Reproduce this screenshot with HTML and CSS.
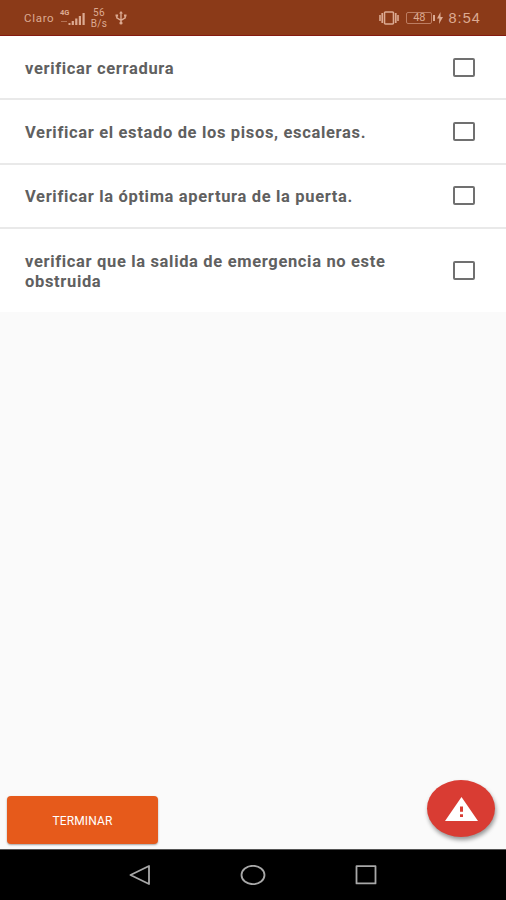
FILE: index.html
```html
<!DOCTYPE html>
<html lang="es">
<head>
    <meta charset="UTF-8">
    <meta name="viewport" content="width=device-width, initial-scale=1.0">
    <title>Checklist</title>
    <link rel="stylesheet" href="styles.css">
</head>
<body>
    <div class="screen">
        <header class="status-bar">
            <div class="status-left">
                <span class="carrier">Claro</span>
                <div class="signal">
                    <span class="network">4G</span>
                    <svg width="26" height="18" viewBox="0 0 26 18" fill="currentColor">
                        <path d="M1 12h6v1H1z" opacity=".5"/>
                        <path d="M8.500 14h2v2h-2zM11.700 12h2.200v4h-2.200zM15.200 9.500h2.200V16h-2.200zM18.800 7H21v9h-2.200zM22.500 4h2.200v12h-2.200z"/>
                    </svg>
                </div>
                <div class="speed"><span>56</span><span>B/s</span></div>
                <svg class="usb" width="12" height="14" viewBox="0 0 12 14" fill="none" stroke="currentColor" stroke-width="1.400">
                    <path d="M6 2v9M1.800 4.500v2.300L6 9.300M10.200 4.500v2.300L6 9.300"/>
                    <path d="M6 0l2 2.500H4zM.5 3.500h2.600v2H.5zM9 3.500h2.500v2H9z" fill="currentColor" stroke="none"/>
                    <circle cx="6" cy="12" r="1.600" fill="currentColor" stroke="none"/>
                </svg>
            </div>
            <div class="status-right">
                <svg width="20" height="14" viewBox="0 0 20 14" fill="none" stroke="currentColor" stroke-width="1.600">
                    <rect x="5.500" y="1" width="9" height="12" rx="1"/>
                    <path d="M3.200 2v10M16.800 2v10M1 4v6M19 4v6"/>
                </svg>
                <div class="battery"><span>48</span></div>
                <svg class="bolt" width="6" height="12" viewBox="0 0 6 12" fill="currentColor">
                    <path d="M3.500 0L0 6.500h2.300L2 12l4-7H3.500z"/>
                </svg>
                <span class="clock">8:54</span>
            </div>
        </header>

        <main class="content">
            <ul class="checklist">
                <li class="item">
                    <span class="item-text">verificar cerradura</span>
                    <input type="checkbox" class="check">
                </li>
                <li class="item">
                    <span class="item-text">Verificar el estado de los pisos, escaleras.</span>
                    <input type="checkbox" class="check">
                </li>
                <li class="item">
                    <span class="item-text">Verificar la óptima apertura de la puerta.</span>
                    <input type="checkbox" class="check">
                </li>
                <li class="item">
                    <span class="item-text">verificar que la salida de emergencia no este obstruida</span>
                    <input type="checkbox" class="check">
                </li>
            </ul>
            <div class="actions">
                <button class="btn-finish">TERMINAR</button>
                <button class="fab" aria-label="Alerta">
                    <svg width="33" height="24" viewBox="0 0 33 24">
                        <path d="M16.500 0L33 24H0z" fill="#fff"/>
                        <path d="M15 9.500h3v5.200h-3zM15 17.300h3v2.700h-3z" fill="#d93c33"/>
                    </svg>
                </button>
            </div>
        </main>

        <nav class="nav-bar">
            <svg width="22" height="20" viewBox="0 0 22 20">
                <path d="M20 1v18L1.500 10z"/>
            </svg>
            <svg width="26" height="20" viewBox="0 0 26 20">
                <ellipse cx="13" cy="10" rx="11.500" ry="9.200"/>
            </svg>
            <svg width="22" height="20" viewBox="0 0 22 20">
                <rect x="1.500" y="1.200" width="19" height="17.200"/>
            </svg>
        </nav>
    </div>
</body>
</html>
```

FILE: styles.css
```css
* {
    box-sizing: border-box;
}
body {
    margin: 0;
    font-family: Roboto, sans-serif;
    background-color: #fafafa;
}
.screen {
    display: flex;
    flex-direction: column;
    height: 900px;
}

/* status bar */
.status-bar {
    display: flex;
    justify-content: space-between;
    height: 36px;
    padding: 1px 25px 0 24px;
    background-color: #8b3a18;
    border-bottom: 1px solid #861a10;
    color: #dcaa92;
}
.status-left,
.status-right {
    display: flex;
    align-items: center;
}
.carrier {
    font-size: 11.5px;
    letter-spacing: 0.7px;
    width: 36px;
}
.signal {
    position: relative;
    display: flex;
}
.network {
    position: absolute;
    top: 0;
    left: 0;
    font-size: 7.5px;
    font-weight: bold;
    line-height: 8px;
}
.speed {
    display: flex;
    flex-direction: column;
    align-items: center;
    width: 18px;
    margin-left: 4px;
    font-size: 10px;
    letter-spacing: 0.4px;
    line-height: 11px;
}
.usb {
    margin-left: 7px;
}
.battery {
    position: relative;
    width: 26px;
    height: 12px;
    margin-left: 7px;
    border: 1px solid #bd7d62;
    border-radius: 2px;
    font-size: 11px;
    line-height: 10px;
    text-align: center;
}
.battery::after {
    content: "";
    position: absolute;
    top: 2px;
    right: -4px;
    width: 2px;
    height: 6px;
    background-color: #dcaa92;
}
.bolt {
    margin-left: 5px;
}
.clock {
    margin-left: 5px;
    font-family: "Liberation Sans", Arial, sans-serif;
    font-size: 14.5px;
    letter-spacing: 1.1px;
}

/* list */
.content {
    flex: 1;
    display: flex;
    flex-direction: column;
    justify-content: space-between;
}
.checklist {
    margin: 0;
    padding: 0;
    list-style: none;
    background-color: #fff;
}
.item {
    display: flex;
    align-items: center;
    justify-content: space-between;
    height: 64.400px;
    padding: 0 31px 0 25px;
    border-bottom: 2px solid #e9e9e9;
}
.item:last-child {
    height: 82.800px;
    border-bottom: none;
}
.item-text {
    width: 375px;
    padding-top: 3px;
    font-size: 16.5px;
    font-weight: bold;
    line-height: 20px;
    letter-spacing: 0.66px;
    color: #606060;
}
.check {
    appearance: none;
    width: 22px;
    height: 19px;
    margin: 0;
    border: 2px solid #707070;
    border-radius: 2px;
}

/* bottom buttons */
.actions {
    display: flex;
    align-items: flex-end;
    justify-content: space-between;
    padding: 0 11px 5px 7px;
}
.btn-finish {
    width: 151px;
    height: 48px;
    padding-top: 2px;
    border: none;
    border-radius: 4px;
    background-color: #e65a1b;
    box-shadow: 0 1px 2px rgba(0, 0, 0, 0.35);
    font-family: inherit;
    font-size: 12px;
    letter-spacing: 0.1px;
    color: #fff;
}
.fab {
    display: flex;
    align-items: center;
    justify-content: center;
    width: 68px;
    height: 57px;
    margin-bottom: 7px;
    padding: 0;
    border: none;
    border-radius: 50%;
    background-color: #d93c33;
    box-shadow: 1px 3px 4px rgba(0, 0, 0, 0.4);
}

/* navigation bar */
.nav-bar {
    display: flex;
    align-items: center;
    justify-content: center;
    gap: 89px;
    height: 51px;
    border-top: 1px solid #555;
    background-color: #000;
}
.nav-bar svg {
    fill: none;
    stroke: #a8a8a8;
    stroke-width: 1.8;
    stroke-linejoin: round;
}
```
